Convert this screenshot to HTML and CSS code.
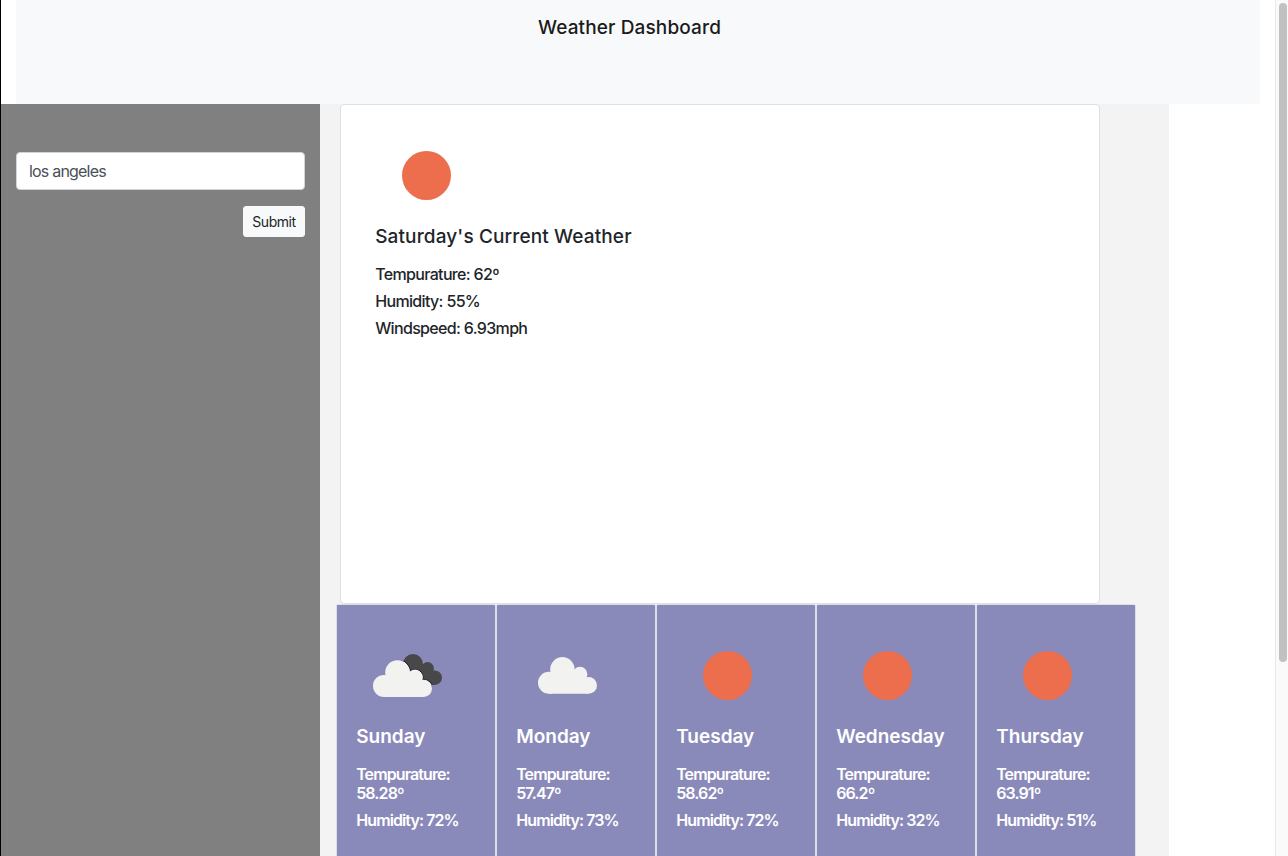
FILE: index.html
```html
<!DOCTYPE html>
<html lang="en">
<head>
<meta charset="utf-8">
<title>Weather Dashboard</title>
<link rel="stylesheet" href="styles.css">
</head>
<body>
<svg class="defs" width="0" height="0">
  <defs>
    <symbol id="sun" viewBox="0 0 100 100"><circle cx="50.5" cy="50.5" r="24.5" fill="#ec6e4c"/></symbol>
    <g id="cloud-shape">
      <circle cx="32" cy="57.7" r="11"/><circle cx="45.4" cy="44.3" r="12.2"/>
      <circle cx="63" cy="49.2" r="7.4"/><circle cx="71.6" cy="60.4" r="8.4"/>
      <path d="M32 50h31l8.600 5v13.750H32z"/>
    </g>
    <clipPath id="dark-clip"><circle cx="56" cy="39" r="10"/><circle cx="70.700" cy="43.300" r="6.200"/><circle cx="77.700" cy="52.700" r="7.300"/><path d="M52 40h18l7 6v14H60z"/></clipPath>
    <symbol id="cloud" viewBox="0 0 100 100"><use href="#cloud-shape" fill="#f2f2f0"/></symbol>
    <symbol id="clouds" viewBox="0 0 100 100">
      <g clip-path="url(#dark-clip)">
        <rect width="100" height="100" fill="#48484a"/>
        <use href="#cloud-shape" transform="translate(-5 3.200)" fill="#222224" stroke="#222224" stroke-width="2.400"/>
        <use href="#cloud-shape" transform="translate(-5 3.200)" fill="#fff" stroke="#fff" stroke-width="0.800"/>
      </g>
      <use href="#cloud-shape" transform="translate(-5 3.200)" fill="#f2f2f0"/>
    </symbol>
  </defs>
</svg>
<div class="page">
  <div class="content">
    <header class="header"><h5>Weather Dashboard</h5></header>
    <div class="row">
      <aside class="sidebar">
        <input class="field" type="text" value="los angeles">
        <button class="submit">Submit</button>
      </aside>
      <main class="main">
        <section class="current">
          <svg class="icon"><use href="#sun"/></svg>
          <h5>Saturday's Current Weather</h5>
          <h6>Tempurature: 62º</h6>
          <h6>Humidity: 55%</h6>
          <h6>Windspeed: 6.93mph</h6>
        </section>
        <section class="forecast">
          <article class="day"><svg class="icon"><use href="#clouds"/></svg><h5>Sunday</h5><h6>Tempurature: 58.28º</h6><h6>Humidity: 72%</h6></article>
          <article class="day"><svg class="icon"><use href="#cloud"/></svg><h5>Monday</h5><h6>Tempurature: 57.47º</h6><h6>Humidity: 73%</h6></article>
          <article class="day"><svg class="icon"><use href="#sun"/></svg><h5>Tuesday</h5><h6>Tempurature: 58.62º</h6><h6>Humidity: 72%</h6></article>
          <article class="day"><svg class="icon"><use href="#sun"/></svg><h5>Wednesday</h5><h6>Tempurature: 66.2º</h6><h6>Humidity: 32%</h6></article>
          <article class="day"><svg class="icon"><use href="#sun"/></svg><h5>Thursday</h5><h6>Tempurature: 63.91º</h6><h6>Humidity: 51%</h6></article>
        </section>
      </main>
    </div>
  </div>
  <div class="scrollbar"><div class="thumb"></div></div>
</div>
</body>
</html>
```
FILE: styles.css
```css
* { box-sizing: border-box; }
body { margin: 0; background: #fff; color: #212529; font-family: Inter, "Liberation Sans", sans-serif; }
.defs { display: block; }
.page { display: flex; height: 856px; overflow: hidden; border-left: 1px solid #000; }
.content { flex: 1; display: flex; flex-direction: column; min-width: 0; }
h5 { margin: 0; font-size: 19px; line-height: 24px; font-weight: 500; letter-spacing: 0.13px; white-space: nowrap; }
h6 { margin: 0 0 8px; font-size: 16px; line-height: 19px; font-weight: 500; letter-spacing: -0.66px; }
.header { flex: none; height: 104px; margin: 0 15px; padding: 16px 17px 0 0; background: #f8f9fb; color: #1b1b1b; text-align: center; }
.row { flex: 1; display: flex; min-height: 0; }
.sidebar { width: 319px; padding: 48px 15px 0; background: #808080; display: flex; flex-direction: column; align-items: flex-end; gap: 16px; }
.field { width: 100%; height: 38px; padding: 6px 12px; border: 1px solid #ced4da; border-radius: 4px; background: #fff; color: #495057; font: 400 16px/24px Inter, sans-serif; letter-spacing: -0.8px; }
.submit { width: 62px; height: 31px; padding: 0; border: 1px solid #f8f9fa; border-radius: 3px; background: #f8f9fa; color: #212529; font: 400 14px/21px Inter, sans-serif; letter-spacing: -0.45px; }
.main { width: 849px; padding-left: 16px; background: #f3f3f3; }
.current { width: 760px; height: 500px; margin-left: 4px; padding: 20px 35px; border: 1px solid #dfdfdf; border-radius: 4px; background: #fff; }
.icon { display: block; width: 100px; height: 100px; }
.current h5, .day h5 { margin: 0 0 16px -0.8px; }
.current h6, .day h6 { margin-left: -0.8px; }
.forecast { display: flex; }
.day { width: 160px; height: 300px; padding: 20px; border: 1px solid #dfdfdf; border-radius: 2px; background: #8989ba; color: #fff; }
.day h5 { font-weight: 600; letter-spacing: 0; }
.day h6 { font-weight: 600; letter-spacing: -0.9px; }
.scrollbar { width: 13px; padding: 3px 1px 0 3px; border-left: 1px solid #e8e8e8; background: #fafafa; }
.thumb { height: 659px; border-radius: 4px; background: #c1c1c1; }
```
